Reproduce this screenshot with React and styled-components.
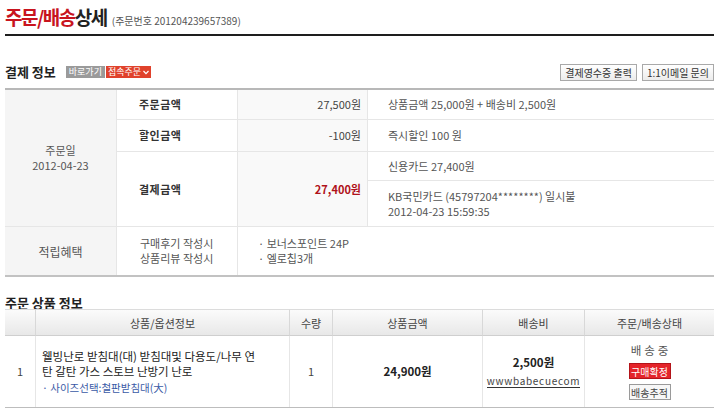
import React from "react";
import styled, { createGlobalStyle } from "styled-components";

const Global = createGlobalStyle`
  html, body { margin: 0; padding: 0; background: #fff; }
  body { font-family: "Noto Sans CJK KR", "Noto Sans", sans-serif; color: #333; }
  * { box-sizing: border-box; }
`;

const Page = styled.div`
  width: 709px;
  margin: 0 0 0 5px;
  padding-top: 5px;
`;

const TitleBar = styled.div`
  display: flex;
  align-items: baseline;
  gap: 5px;
  padding-bottom: 5px;
  border-bottom: 2px solid #1e1e1e;
`;

const Title = styled.h1`
  margin: 0;
  font-size: 19px;
  line-height: 24px;
  font-weight: 700;
  letter-spacing: -1.5px;
  color: #222;
`;

const Red = styled.span`
  color: #c8141e;
`;

const OrderNo = styled.span`
  font-size: 10px;
  color: #555;
`;

const SectionBar = styled.div`
  display: flex;
  align-items: center;
  height: 20px;
  margin-top: 26px;
  margin-bottom: 6px;
`;

const SectionTitle = styled.h2`
  margin: 0 10px 0 0;
  font-size: 13px;
  line-height: 16px;
  font-weight: 700;
  color: #222;
`;

const Badge = styled.span`
  display: inline-flex;
  align-items: center;
  height: 12px;
  padding: 0 ${(p) => (p.$red ? "2px" : "3px")};
  font-size: 9px;
  line-height: 12px;
  color: #fff;
  background: ${(p) => (p.$red ? "#e0422c" : "#9a9a9a")};
  margin-right: ${(p) => (p.$red ? "0" : "1px")};
`;

const Spacer = styled.div`
  flex: 1;
`;

const SmallButton = styled.button`
  height: 17px;
  padding: 0 4px;
  margin-left: 5px;
  font-family: inherit;
  font-size: 10px;
  line-height: 15px;
  color: #333;
  background: linear-gradient(#ffffff, #ececec);
  border: 1px solid #a9a9a9;
  border-radius: 0;
`;

const PayGrid = styled.div`
  display: grid;
  grid-template-columns: 112px 121px 130px 1fr;
  grid-template-rows: 30px 32px 29px 46px 48px;
  border-top: 2px solid #b8b8b8;
  border-bottom: 2px solid #c2c2c2;
`;

const Cell = styled.div`
  grid-column: ${(p) => p.$col} / span ${(p) => p.$cs || 1};
  grid-row: ${(p) => p.$row} / span ${(p) => p.$rs || 1};
  display: flex;
  flex-direction: column;
  justify-content: center;
  align-items: ${(p) => (p.$align === "center" ? "center" : p.$align === "right" ? "flex-end" : "flex-start")};
  text-align: ${(p) => p.$align || "left"};
  padding: ${(p) => p.$pad || "0"};
  background: ${(p) => p.$bg || "#fff"};
  border-right: ${(p) => (p.$last ? "none" : "1px solid #e6e6e6")};
  border-bottom: ${(p) => (p.$nob ? "none" : "1px solid #e6e6e6")};
  font-size: ${(p) => p.$fs || "11px"};
  line-height: 15px;
  color: #555;
`;

const Label = styled.span`
  font-size: 11px;
  font-weight: 700;
  color: #333;
  letter-spacing: 0.5px;
`;

const Amount = styled.span`
  font-size: 11px;
  color: ${(p) => (p.$red ? "#b0121a" : "#444")};
  font-weight: ${(p) => (p.$red ? 700 : 400)};
`;

const BlockTitle = styled.h2`
  margin: 19px 0 0 0;
  height: 13px;
  font-size: 13px;
  line-height: 13px;
  font-weight: 700;
  color: #222;
`;

const ProdGrid = styled.div`
  display: grid;
  grid-template-columns: 31px 254px 43px 150px 102px 1fr;
  grid-template-rows: 27px 71px;
  border-bottom: 1px solid #bdbdbd;
`;

const Head = styled.div`
  display: flex;
  align-items: center;
  justify-content: center;
  background: linear-gradient(#fbfbfb, #e8e8e8);
  border-top: 1px solid #dcdcdc;
  border-bottom: 1px solid #cfcfcf;
  border-right: ${(p) => (p.$last ? "none" : "1px solid #d8d8d8")};
  font-size: 11px;
  color: #444;
`;

const Body = styled.div`
  display: flex;
  flex-direction: column;
  justify-content: center;
  align-items: ${(p) => (p.$left ? "flex-start" : "center")};
  padding: ${(p) => (p.$left ? "0 0 0 6px" : "0")};
  border-right: ${(p) => (p.$last ? "none" : "1px solid #e6e6e6")};
  font-size: 11px;
  line-height: 15px;
  color: #444;
  gap: ${(p) => p.$gap || "0"};
`;

const ProdName = styled.div`
  font-size: 11.5px;
  line-height: 15px;
  color: #222;
`;

const Option = styled.div`
  margin-top: 1px;
  font-size: 10.5px;
  color: #3a5aa6;
`;

const Price = styled.span`
  font-size: 11.5px;
  font-weight: 700;
  color: #222;
`;

const Link = styled.span`
  margin-top: 4px;
  font-size: 10px;
  letter-spacing: 0.7px;
  color: #444;
  border-bottom: 1px solid #333;
  line-height: 13px;
`;

const Status = styled.span`
  font-size: 11.5px;
  letter-spacing: 3px;
  color: #555;
  margin-right: -3px;
`;

const TinyButton = styled.span`
  display: inline-flex;
  align-items: center;
  justify-content: center;
  width: 42px;
  height: 16px;
  font-size: 10px;
  color: ${(p) => (p.$red ? "#fff" : "#444")};
  background: ${(p) => (p.$red ? "#e4242a" : "#f7f7f7")};
  border: 1px solid ${(p) => (p.$red ? "#b3141a" : "#9a9a9a")};
`;

const Chevron = () => (
  <svg width="6" height="5" viewBox="0 0 6 5" style={{ marginLeft: 2 }}>
    <path d="M0.5 1 L3 3.6 L5.5 1" stroke="#fff" strokeWidth="1.2" fill="none" />
  </svg>
);

export default function App() {
  return (
    <Page>
      <Global />
      <TitleBar>
        <Title>
          <Red>주문/배송</Red>상세
        </Title>
        <OrderNo>(주문번호 201204239657389)</OrderNo>
      </TitleBar>

      <SectionBar>
        <SectionTitle>결제 정보</SectionTitle>
        <Badge>바로가기</Badge>
        <Badge $red>
          접속주문
          <Chevron />
        </Badge>
        <Spacer />
        <SmallButton>결제영수증 출력</SmallButton>
        <SmallButton>1:1이메일 문의</SmallButton>
      </SectionBar>

      <PayGrid>
        <Cell $col={1} $row={1} $rs={4} $bg="#f5f5f5" $align="center">
          주문일
          <br />
          2012-04-23
        </Cell>
        <Cell $col={2} $row={1} $pad="0 0 0 22px">
          <Label>주문금액</Label>
        </Cell>
        <Cell $col={3} $row={1} $bg="#f9f9f9" $align="right" $pad="0 6px 0 0">
          <Amount>27,500원</Amount>
        </Cell>
        <Cell $col={4} $row={1} $pad="0 0 0 20px" $last>
          상품금액 25,000원 + 배송비 2,500원
        </Cell>

        <Cell $col={2} $row={2} $pad="0 0 0 22px">
          <Label>할인금액</Label>
        </Cell>
        <Cell $col={3} $row={2} $bg="#f9f9f9" $align="right" $pad="0 6px 0 0">
          <Amount>-100원</Amount>
        </Cell>
        <Cell $col={4} $row={2} $pad="0 0 0 20px" $last>
          즉시할인 100 원
        </Cell>

        <Cell $col={2} $row={3} $rs={2} $pad="0 0 0 22px">
          <Label>결제금액</Label>
        </Cell>
        <Cell $col={3} $row={3} $rs={2} $bg="#f9f9f9" $align="right" $pad="0 6px 0 0">
          <Amount $red>27,400원</Amount>
        </Cell>
        <Cell $col={4} $row={3} $pad="0 0 0 20px" $last>
          신용카드 27,400원
        </Cell>
        <Cell $col={4} $row={4} $pad="0 0 0 20px" $last>
          KB국민카드 (45797204********) 일시불
          <br />
          2012-04-23 15:59:35
        </Cell>

        <Cell $col={1} $row={5} $bg="#f5f5f5" $align="center" $fs="12px" $nob>
          적립혜택
        </Cell>
        <Cell $col={2} $row={5} $pad="0 0 0 23px" $nob>
          구매후기 작성시
          <br />
          상품리뷰 작성시
        </Cell>
        <Cell $col={3} $cs={2} $row={5} $pad="0 0 0 20px" $nob $last>
          · 보너스포인트 24P
          <br />
          · 엘로칩3개
        </Cell>
      </PayGrid>

      <BlockTitle>주문 상품 정보</BlockTitle>
      <ProdGrid>
        <Head />
        <Head>상품/옵션정보</Head>
        <Head>수량</Head>
        <Head>상품금액</Head>
        <Head>배송비</Head>
        <Head $last>주문/배송상태</Head>

        <Body>1</Body>
        <Body $left>
          <ProdName>
            웰빙난로 받침대(대) 받침대및 다용도/나무 연
            <br />
            탄 갈탄 가스 스토브 난방기 난로
          </ProdName>
          <Option>· 사이즈선택:철판받침대(大)</Option>
        </Body>
        <Body>1</Body>
        <Body>
          <Price>24,900원</Price>
        </Body>
        <Body>
          <Price>2,500원</Price>
          <Link>wwwbabecuecom</Link>
        </Body>
        <Body $last $gap="5px">
          <Status>배송중</Status>
          <TinyButton $red>구매확정</TinyButton>
          <TinyButton>배송추적</TinyButton>
        </Body>
      </ProdGrid>
    </Page>
  );
}
